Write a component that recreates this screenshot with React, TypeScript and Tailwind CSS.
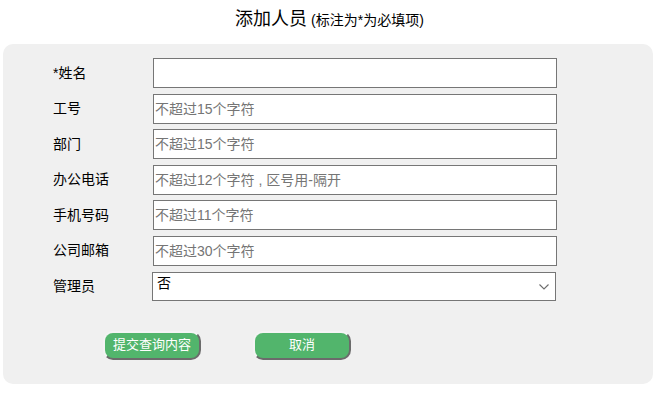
const fields = [
  { label: '*姓名', placeholder: '' },
  { label: '工号', placeholder: '不超过15个字符' },
  { label: '部门', placeholder: '不超过15个字符' },
  { label: '办公电话', placeholder: '不超过12个字符 , 区号用-隔开' },
  { label: '手机号码', placeholder: '不超过11个字符' },
  { label: '公司邮箱', placeholder: '不超过30个字符' },
];

const font = { fontFamily: '"Liberation Sans", "Noto Sans CJK SC", sans-serif' };

export default function App() {
  return (
    <div className="w-[659px] h-[393px] bg-white text-black" style={font}>
      <div className="h-[44px] flex items-center justify-center pb-[5px]">
        <span className="text-[18px]">添加人员</span>
        <span className="text-[14px] ml-[4px] mt-[2px]">(标注为*为必填项)</span>
      </div>

      <div className="ml-[3px] w-[650px] bg-[#f0f0f0] rounded-[10px] pt-[14px] pb-[24px] pl-[50px]">
        <div className="flex flex-col gap-[5.6px]">
          {fields.map((f) => (
            <div key={f.label} className="flex items-center h-[30px]">
              <label className="w-[100px] text-[14px]">{f.label}</label>
              <input
                type="text"
                placeholder={f.placeholder}
                className="w-[404px] h-[30px] bg-white border border-[#767676] px-[1px] text-[14px] placeholder:text-[#757575] outline-none"
                style={font}
              />
            </div>
          ))}
          <div className="flex items-center h-[30px]">
            <label className="w-[99px] text-[14px]">管理员</label>
            <div className="relative w-[404px] h-[29px] bg-white border border-[#767676] flex items-center">
              <span className="pl-[4px] text-[14px] -mt-[6px]">否</span>
              <svg
                className="absolute right-[6px] top-[11px]"
                width="10"
                height="6"
                viewBox="0 0 10 6"
                fill="none"
              >
                <polyline points="0.5,0.5 5,5 9.5,0.5" stroke="#6d6d6d" strokeWidth="1.1" />
              </svg>
            </div>
          </div>
        </div>

        <div className="flex mt-[29px] pl-[50px] gap-[52px]">
          <button className="w-[98px] h-[29px] rounded-[10px] bg-[#52b56c] text-white text-[13px] border-2 border-t-[#f4f4f4] border-l-[#f4f4f4] border-r-[#6b6b6b] border-b-[#6b6b6b]">
            提交查询内容
          </button>
          <button className="w-[98px] h-[29px] rounded-[10px] bg-[#52b56c] text-white text-[13px] border-2 border-t-[#f4f4f4] border-l-[#f4f4f4] border-r-[#6b6b6b] border-b-[#6b6b6b]">
            取消
          </button>
        </div>
      </div>
    </div>
  );
}
